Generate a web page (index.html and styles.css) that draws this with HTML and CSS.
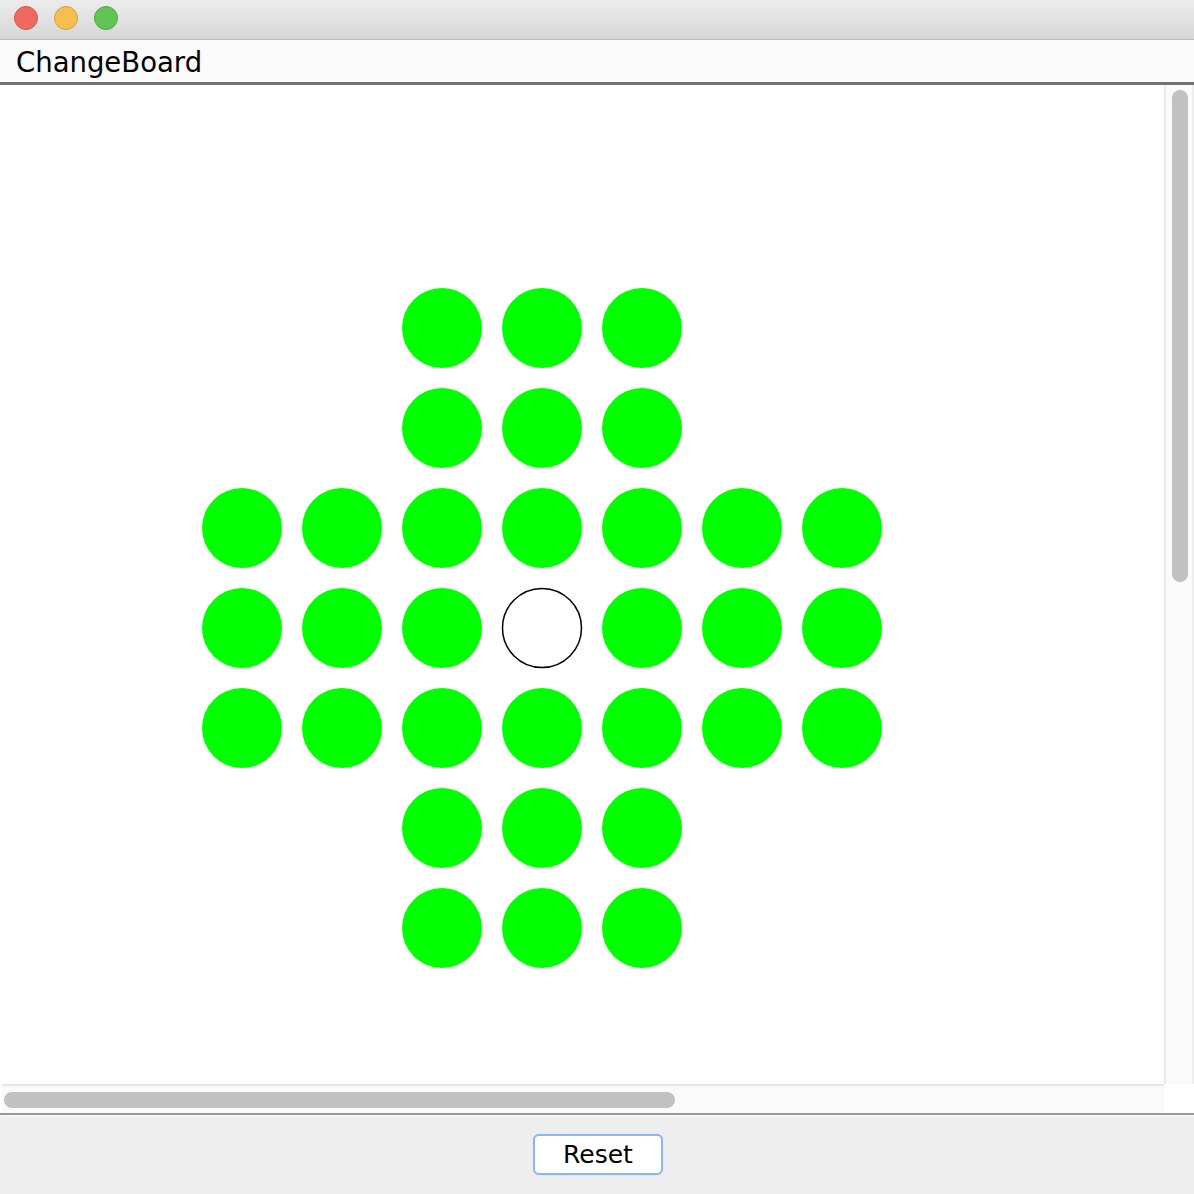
FILE: index.html
```html
<!DOCTYPE html>
<html>
<head>
<meta charset="utf-8">
<link rel="stylesheet" href="styles.css">
</head>
<body>
<div class="window">
  <div class="titlebar">
    <span class="light red"></span>
    <span class="light yellow"></span>
    <span class="light green"></span>
  </div>
  <div class="menubar"><span class="menu">ChangeBoard</span></div>
  <div class="scrollpane">
    <div class="viewport">
      <svg class="board" width="700" height="700" viewBox="0 0 700 700">
        <g fill="#00ff00">
          <circle cx="250" cy="50" r="40"/><circle cx="350" cy="50" r="40"/><circle cx="450" cy="50" r="40"/>
          <circle cx="250" cy="150" r="40"/><circle cx="350" cy="150" r="40"/><circle cx="450" cy="150" r="40"/>
          <circle cx="50" cy="250" r="40"/><circle cx="150" cy="250" r="40"/><circle cx="250" cy="250" r="40"/><circle cx="350" cy="250" r="40"/><circle cx="450" cy="250" r="40"/><circle cx="550" cy="250" r="40"/><circle cx="650" cy="250" r="40"/>
          <circle cx="50" cy="350" r="40"/><circle cx="150" cy="350" r="40"/><circle cx="250" cy="350" r="40"/><circle cx="450" cy="350" r="40"/><circle cx="550" cy="350" r="40"/><circle cx="650" cy="350" r="40"/>
          <circle cx="50" cy="450" r="40"/><circle cx="150" cy="450" r="40"/><circle cx="250" cy="450" r="40"/><circle cx="350" cy="450" r="40"/><circle cx="450" cy="450" r="40"/><circle cx="550" cy="450" r="40"/><circle cx="650" cy="450" r="40"/>
          <circle cx="250" cy="550" r="40"/><circle cx="350" cy="550" r="40"/><circle cx="450" cy="550" r="40"/>
          <circle cx="250" cy="650" r="40"/><circle cx="350" cy="650" r="40"/><circle cx="450" cy="650" r="40"/>
        </g>
        <circle cx="350" cy="350" r="39.5" fill="#ffffff" stroke="#000000" stroke-width="1.5"/>
      </svg>
    </div>
    <div class="vscroll"><div class="vthumb"></div></div>
    <div class="hscroll"><div class="hthumb"></div></div>
    <div class="corner"></div>
  </div>
  <div class="bottom">
    <button class="reset">Reset</button>
  </div>
</div>
</body>
</html>
```
FILE: styles.css
```css
html, body {
  margin: 0;
  padding: 0;
  background: #ffffff;
}
.window {
  width: 1194px;
  height: 1194px;
  display: flex;
  flex-direction: column;
  overflow: hidden;
  font-family: "DejaVu Sans", "Liberation Sans", sans-serif;
}
.titlebar {
  height: 39px;
  flex: none;
  background: linear-gradient(#ececec, #d6d6d6);
  border-bottom: 1px solid #bdbdbd;
  display: flex;
  align-items: center;
  gap: 16px;
  padding-left: 14px;
  box-sizing: content-box;
}
.light {
  width: 22px;
  height: 22px;
  border-radius: 50%;
  border: 1px solid;
  margin-top: -3px;
}
.red { background: #ee6a5f; border-color: #d4574c; }
.yellow { background: #f6be4f; border-color: #d9a03c; }
.green { background: #61c454; border-color: #4fa841; }
.menubar {
  height: 42px;
  flex: none;
  background: #fafafa;
  border-bottom: 3px solid #727272;
  display: flex;
  align-items: center;
  padding-left: 16px;
}
.menu {
  font-size: 27.5px;
  color: #000000;
  margin-top: 1px;
}
.scrollpane {
  flex: 1;
  display: grid;
  grid-template-columns: 1fr 30px;
  grid-template-rows: 1fr 29px;
  background: #ffffff;
  border-bottom: 2px solid #9a9a9a;
}
.viewport {
  background: #ffffff;
  padding-left: 192px;
  padding-top: 193px;
  overflow: hidden;
}
.board {
  display: block;
}
.vscroll {
  background: #fafafa;
  border-left: 2px solid #e8e8e8;
  border-right: 2px solid #eeeeee;
  padding: 5px 0 0 6px;
  box-sizing: border-box;
}
.vthumb {
  width: 16px;
  height: 492px;
  border-radius: 8px;
  background: #c1c1c1;
}
.hscroll {
  background: #fafafa;
  border-top: 2px solid #e6e6e6;
  margin-left: 2px;
  padding: 6px 0 0 2px;
  box-sizing: border-box;
}
.hthumb {
  width: 671px;
  height: 16px;
  border-radius: 8px;
  background: #c1c1c1;
}
.corner {
  background: #ffffff;
}
.bottom {
  height: 79px;
  flex: none;
  background: #eeeeee;
  border-top: 2px solid #f6f6f6;
  box-sizing: border-box;
  display: flex;
  justify-content: center;
  align-items: flex-start;
  padding-top: 17px;
}
.reset {
  width: 130px;
  height: 41px;
  margin-left: 2px;
  background: #ffffff;
  border: 2px solid #8ab8ef;
  border-radius: 6px;
  font-family: "DejaVu Sans", "Liberation Sans", sans-serif;
  font-size: 25px;
  color: #000000;
  padding: 0;
  box-shadow: 0 0 1px #a9c9f2;
}
```
